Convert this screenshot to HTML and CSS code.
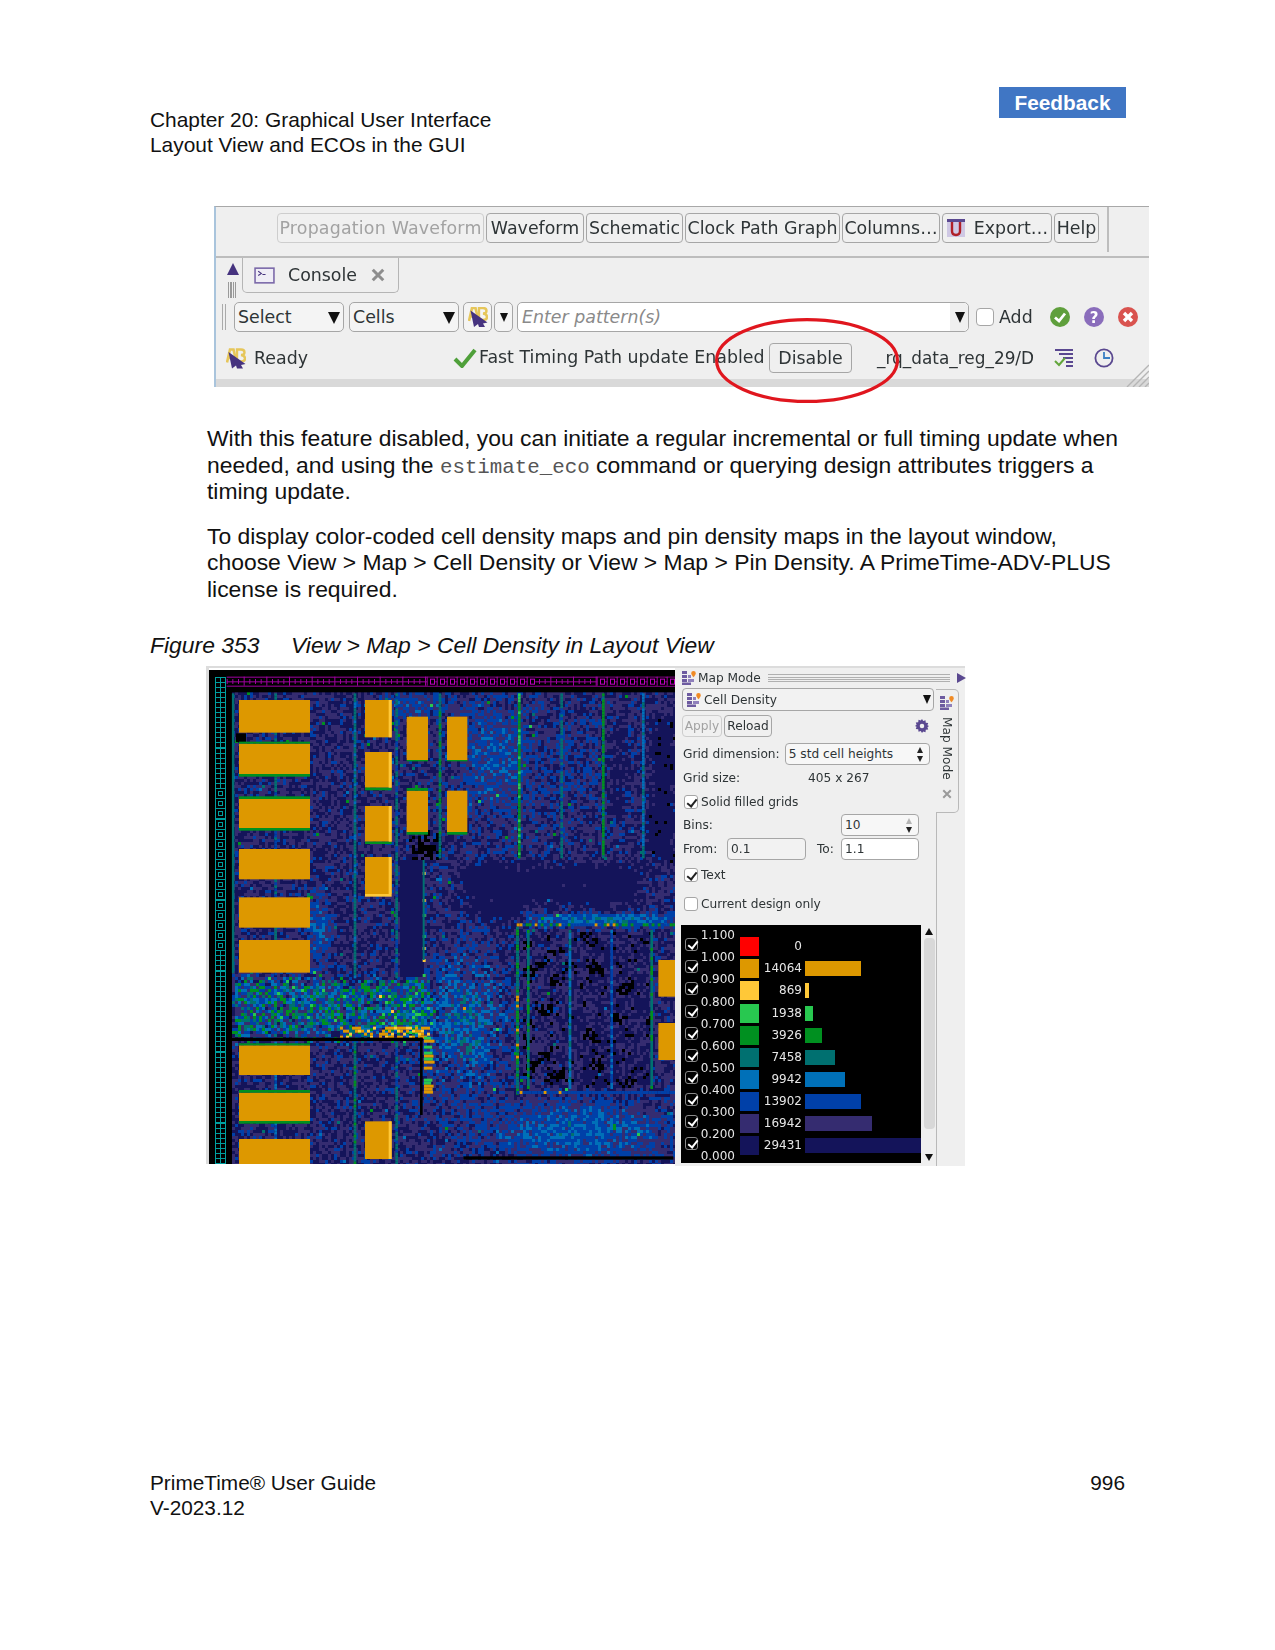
FILE: index.html
```html
<!DOCTYPE html>
<html lang="en">
<head>
<meta charset="utf-8">
<title>Layout View and ECOs in the GUI</title>
<link rel="stylesheet" href="styles.css">
</head>
<body>
<svg class="defs" width="0" height="0" aria-hidden="true">
  <symbol id="mapicon" viewBox="0 0 14 14">
    <rect x="0" y="0" width="5" height="3" fill="#6d5ba0"/><rect x="0" y="4" width="5" height="3" fill="#6d5ba0"/>
    <rect x="6" y="4" width="3" height="3" fill="#8f80bb"/><rect x="0" y="8" width="5" height="3" fill="#6d5ba0"/>
    <rect x="6" y="8" width="6" height="3" fill="#8f80bb"/><rect x="0" y="11.5" width="9" height="2.5" fill="#6d5ba0"/>
    <path d="M11.5 0a2.3 2.3 0 0 1 2.3 2.3c0 1.5-2.3 4-2.3 4s-2.300-2.500-2.300-4A2.300 2.300 0 0 1 11.500 0z" fill="#f08a24"/>
  </symbol>
  <symbol id="abicon" viewBox="0 0 20 20">
    <path d="M1 14 L4 1 L7.500 1 L10.500 14 M2.500 9.500 H9" fill="none" stroke="#e6c65a" stroke-width="2.600"/>
    <path d="M11 1 H15 Q18.500 1 18.500 4 Q18.500 6.500 15 6.500 Q19 7 19 10 Q19 13 15 13 H11 Z" fill="none" stroke="#e6c65a" stroke-width="2.400"/>
    <path d="M2.500 3.500 L19.500 15.500 L15 16.500 L17 20 L11 20 L10 17 L6 20 Z" fill="#46337f"/>
  </symbol>
</svg>
<div class="page">
  <header class="doc-head">
    <div class="chapter">
      <div>Chapter 20: Graphical User Interface</div>
      <div>Layout View and ECOs in the GUI</div>
    </div>
    <a class="feedback">Feedback</a>
  </header>

  <section class="toolbar">
    <div class="tabs">
      <span class="btn off w-prop">Propagation Waveform</span>
      <span class="btn w-wave">Waveform</span>
      <span class="btn w-sch">Schematic</span>
      <span class="btn w-clk">Clock Path Graph</span>
      <span class="btn w-col">Columns…</span>
      <span class="btn w-exp">
        <svg class="ico-export" viewBox="0 0 20 20" aria-hidden="true"><rect x="1" y="1" width="18" height="18" fill="#cfc8e4"/><rect x="1" y="1" width="18" height="3" fill="#5a4890"/><path d="M6 4 V13 Q6 17 10 17 Q14 17 14 13 V4" fill="none" stroke="#b02028" stroke-width="2.4"/></svg>
        Export…
      </span>
      <span class="btn w-help">Help</span>
      <span class="tabs-sep"></span>
    </div>
    <div class="console-row">
      <div class="side">
        <span class="tri-up"></span>
        <span class="grip-v"></span>
      </div>
      <div class="console-tab">
        <svg class="ico-console" viewBox="0 0 20 16" aria-hidden="true"><rect x="1" y="1" width="18" height="14" fill="#efedf6" stroke="#7a68a8" stroke-width="1.5"/><path d="M4 4 L7 6 L4 8 M8 7 H11" fill="none" stroke="#46337f" stroke-width="1"/></svg>
        <span>Console</span>
        <svg class="ico-x" viewBox="0 0 12 12" aria-hidden="true"><path d="M1.5 1.5 L10.5 10.5 M10.5 1.5 L1.5 10.5" stroke="#8d8d8d" stroke-width="2.6"/></svg>
      </div>
    </div>
    <div class="select-row">
      <span class="grip-row"></span>
      <span class="combo w-select">Select<i class="caret"></i></span>
      <span class="combo w-cells">Cells<i class="caret"></i></span>
      <span class="combo w-ab"><svg class="ico-ab" aria-hidden="true"><use href="#abicon"/></svg></span>
      <span class="combo w-arrow"><i class="caret small"></i></span>
      <span class="input-pattern"><em>Enter pattern(s)</em><b class="end-cap"><i class="caret"></i></b></span>
      <span class="box big"></span>
      <span class="add">Add</span>
      <svg class="round first" viewBox="0 0 20 20" aria-hidden="true"><circle cx="10" cy="10" r="10" fill="#5f9f3c"/><path d="M5 10.5 L9 14 L15 6.5" fill="none" stroke="#fff" stroke-width="2.8"/></svg>
      <svg class="round" viewBox="0 0 20 20" aria-hidden="true"><circle cx="10" cy="10" r="10" fill="#8a6dbb"/><text x="10" y="15.5" class="q">?</text></svg>
      <svg class="round" viewBox="0 0 20 20" aria-hidden="true"><circle cx="10" cy="10" r="10" fill="#d9534f"/><path d="M6 6 L14 14 M14 6 L6 14" stroke="#fff" stroke-width="3.4"/></svg>
    </div>
    <div class="status-row">
      <svg class="ico-ab ready-ico" aria-hidden="true"><use href="#abicon"/></svg>
      <span class="ready">Ready</span>
      <svg class="ico-check" viewBox="0 0 24 20" aria-hidden="true"><path d="M2 11 L9 18 L22 2" fill="none" stroke="#4fa03a" stroke-width="4"/></svg>
      <span class="fast">Fast Timing Path update Enabled</span>
      <span class="btn disable">Disable</span>
      <span class="path">_rq_data_reg_29/D</span>
      <svg class="ico-list" viewBox="0 0 20 20" aria-hidden="true"><path d="M1 2 H19 M5 6 H19 M9 10 H19 M12 14 H19 M12 18 H19" stroke="#5a4890" stroke-width="2"/><path d="M1 13 L5 17 L11 10" fill="none" stroke="#63a63c" stroke-width="2"/></svg>
      <svg class="ico-clock" viewBox="0 0 20 20" aria-hidden="true"><circle cx="10" cy="10" r="8.6" fill="none" stroke="#5a4890" stroke-width="1.8"/><path d="M10 4 V10 H16" fill="none" stroke="#3b7fc4" stroke-width="1.8"/></svg>
    </div>
    <div class="strip"></div>
    <svg class="resize" viewBox="0 0 24 24" aria-hidden="true"><path d="M2 24 L24 2 M8 24 L24 8 M14 24 L24 14 M20 24 L24 20" stroke="#b5b5b5" stroke-width="1.4"/></svg>
    <svg class="ellipse" viewBox="0 0 184 85" aria-hidden="true"><ellipse cx="92" cy="42.500" rx="90.400" ry="40.900" fill="none" stroke="#e0161e" stroke-width="3.200"/></svg>
  </section>

  <main class="copy">
    <p>With this feature disabled, you can initiate a regular incremental or full timing update when needed, and using the <code>estimate_eco</code> command or querying design attributes triggers a timing update.</p>
    <p>To display color-coded cell density maps and pin density maps in the layout window, choose View &gt; Map &gt; Cell Density or View &gt; Map &gt; Pin Density. A PrimeTime-ADV-PLUS license is required.</p>
  </main>

  <div class="caption"><span class="fig-no">Figure 353</span><span>View &gt; Map &gt; Cell Density in Layout View</span></div>

  <section class="figure">
    <canvas id="map" class="map" width="466" height="494"></canvas>
    <aside class="panel">
      <div class="panel-main">
        <div class="pm-head">
          <svg class="mi" aria-hidden="true"><use href="#mapicon"/></svg>
          <span class="pm-title">Map Mode</span>
          <span class="pm-grip"></span>
          <span class="tri-right"></span>
        </div>
        <div class="pm-body">
          <div class="pm-combo"><svg class="mi" aria-hidden="true"><use href="#mapicon"/></svg><span>Cell Density</span><i class="caret"></i></div>
          <div class="pm-actions">
            <span class="btn off sm apply">Apply</span>
            <span class="btn sm reload">Reload</span>
            <svg class="gear" viewBox="0 0 16 16" aria-hidden="true"><path d="M8 0l1.400 2.400 2.600-.9.3 2.800 2.800.3-.9 2.600L16 8l-1.800 1.400.9 2.600-2.800.3-.3 2.800-2.600-.9L8 16l-1.400-2.400-2.600.9-.3-2.800-2.800-.3.9-2.600L0 8l1.800-1.400-.9-2.600 2.800-.3.3-2.800 2.600.9z" fill="#5a4890"/><circle cx="8" cy="8" r="2.600" fill="#efefef"/></svg>
          </div>
          <div class="line griddim"><span>Grid dimension:</span><span class="spin w-grid">5 std cell heights<span class="updown"><i></i><i></i></span></span></div>
          <div class="line gridsize"><span class="gs-label">Grid size:</span><span>405 x 267</span></div>
          <label class="line check-line solid"><span class="box on"></span>Solid filled grids</label>
          <div class="line bins"><span>Bins:</span><span class="spin w-num">10<span class="updown dim"><i></i><i></i></span></span></div>
          <div class="line fromto"><span class="from">From:</span><span class="field w-from">0.1</span><span class="to">To:</span><span class="field w-num">1.1</span></div>
          <label class="line check-line text-chk"><span class="box on"></span>Text</label>
          <label class="line check-line cur"><span class="box"></span>Current design only</label>
          <div class="legend-wrap">
            <div class="legend">
              <div class="l-checks">
                <span class="box on inv"></span><span class="box on inv"></span><span class="box on inv"></span><span class="box on inv"></span><span class="box on inv"></span><span class="box on inv"></span><span class="box on inv"></span><span class="box on inv"></span><span class="box on inv"></span><span class="box on inv"></span>
              </div>
              <div class="l-labels">
                <span>1.100</span><span>1.000</span><span>0.900</span><span>0.800</span><span>0.700</span><span>0.600</span><span>0.500</span><span>0.400</span><span>0.300</span><span>0.200</span><span>0.000</span>
              </div>
              <div class="l-rows">
                <div class="l-row"><i class="sw c0"></i><span class="n">0</span></div>
                <div class="l-row"><i class="sw c1"></i><span class="n">14064</span><i class="bar c1 b1"></i></div>
                <div class="l-row"><i class="sw c2"></i><span class="n">869</span><i class="bar c2 b2"></i></div>
                <div class="l-row"><i class="sw c3"></i><span class="n">1938</span><i class="bar c3 b3"></i></div>
                <div class="l-row"><i class="sw c4"></i><span class="n">3926</span><i class="bar c4 b4"></i></div>
                <div class="l-row"><i class="sw c5"></i><span class="n">7458</span><i class="bar c5 b5"></i></div>
                <div class="l-row"><i class="sw c6"></i><span class="n">9942</span><i class="bar c6 b6"></i></div>
                <div class="l-row"><i class="sw c7"></i><span class="n">13902</span><i class="bar c7 b1"></i></div>
                <div class="l-row"><i class="sw c8"></i><span class="n">16942</span><i class="bar c8 b8"></i></div>
                <div class="l-row"><i class="sw c9"></i><span class="n">29431</span><i class="bar c9 b9"></i></div>
              </div>
            </div>
            <div class="scroll"><span class="tri-up dark"></span><span class="thumb"></span><span class="tri-down"></span></div>
          </div>
        </div>
      </div>
      <div class="dock">
        <div class="dock-tab">
          <svg class="mi" aria-hidden="true"><use href="#mapicon"/></svg>
          <span class="vtext">Map Mode</span>
          <svg class="dock-x" viewBox="0 0 12 12" aria-hidden="true"><path d="M1.500 1.500 L10.500 10.500 M10.500 1.500 L1.500 10.500" stroke="#9a9a9a" stroke-width="2.400"/></svg>
        </div>
      </div>
    </aside>
  </section>

  <footer class="doc-foot">
    <div>
      <div>PrimeTime® User Guide</div>
      <div>V-2023.12</div>
    </div>
    <div>996</div>
  </footer>
</div>
<script src="script.js"></script>
</body>
</html>
```
FILE: styles.css
```css
* { box-sizing: border-box; }
html, body { margin: 0; padding: 0; background: #fff; }
body { font-family: "Liberation Sans", Arial, sans-serif; color: #111; }
.defs { position: absolute; }
.page { width: 1275px; height: 1650px; display: flex; flex-direction: column; }

.doc-head { display: flex; justify-content: space-between; align-items: flex-start; padding: 87px 149px 0 150px; height: 157px; flex: none; }
.chapter { margin-top: 20px; font-size: 20.900px; line-height: 25px; }
.feedback { display: block; width: 127px; height: 31px; background: #4076c4; color: #fff; font-weight: 700; font-size: 20.800px; line-height: 31px; text-align: center; }

/* toolbar */
.toolbar { position: relative; margin: 49px 0 0 214px; width: 935px; height: 181px; flex: none; background: #efefef; border-left: 2px solid #a9c4dc; border-top: 1px solid #a8a8a8; font-family: "DejaVu Sans", sans-serif; font-size: 17.400px; color: #2e3436; display: flex; flex-direction: column; }
.toolbar > *:not(.ellipse) { filter: blur(.35px); }
.btn { display: flex; align-items: center; justify-content: center; height: 30px; border: 1px solid #a6a6a6; border-radius: 4px; background: #f0f0f0; white-space: nowrap; flex: none; }
.btn.off { color: #a2a2a2; border-color: #cdcdcd; }
.tabs { height: 51px; flex: none; display: flex; align-items: flex-start; gap: 2px; padding: 6px 0 0 61px; border-bottom: 2px solid #bdbdbd; }
.w-prop { width: 207px; letter-spacing: .2px; }
.w-wave { width: 98px; }
.w-sch { width: 97px; }
.w-clk { width: 155px; }
.w-col { width: 98px; }
.w-exp { width: 110px; gap: 8px; }
.w-help { width: 45px; }
.ico-export { width: 20px; height: 20px; }
.tabs-sep { width: 2px; height: 45px; margin: -6px 0 0 6px; background: #bdbdbd; }

.console-row { height: 44px; flex: none; display: flex; padding-left: 7px; }
.side { width: 19px; display: flex; flex-direction: column; align-items: center; padding-top: 5px; gap: 7px; }
.tri-up { width: 0; height: 0; border-left: 6px solid transparent; border-right: 6px solid transparent; border-bottom: 12px solid #46337f; }
.grip-v { width: 10px; height: 16px; background: repeating-linear-gradient(90deg, #9a9a9a 0 1px, #efefef 1px 2.500px); }
.console-tab { width: 157px; height: 35px; border: 1px solid #b5b5b5; border-top: 0; border-radius: 0 0 5px 5px; display: flex; align-items: center; gap: 13px; padding-left: 11px; }
.ico-console { width: 21px; height: 17px; }
.ico-x { width: 14px; height: 14px; margin-left: 1px; }

.select-row { height: 30px; flex: none; display: flex; align-items: center; padding-left: 6px; }
.grip-row { width: 5px; height: 26px; margin-right: 7px; background: repeating-linear-gradient(90deg, #aaa 0 1px, #efefef 1px 2.500px); }
.combo { position: relative; height: 30px; border: 1px solid #a6a6a6; border-radius: 5px; background: #f4f4f4; display: flex; align-items: center; padding-left: 3px; flex: none; }
.w-select { width: 110px; margin-right: 5px; }
.w-cells { width: 110px; margin-right: 4px; }
.w-ab { width: 29px; margin-right: 2px; padding-left: 4px; }
.w-arrow { width: 19px; margin-right: 4px; padding-left: 0; justify-content: center; }
.caret { position: absolute; right: 3px; top: 9px; width: 0; height: 0; border-left: 6px solid transparent; border-right: 6px solid transparent; border-top: 12px solid #111; }
.w-arrow .caret { right: 4px; top: 10px; border-left-width: 4.500px; border-right-width: 4.500px; border-top-width: 9px; }
.ico-ab { width: 20px; height: 20px; }
.input-pattern { position: relative; width: 452px; height: 30px; background: #fff; border: 1px solid #a6a6a6; border-radius: 5px; display: flex; align-items: center; padding-left: 4px; color: #8a8a8a; }
.input-pattern em { font-style: italic; }
.end-cap { position: absolute; right: 0; top: 0; width: 18px; height: 28px; background: #efefef; border-radius: 0 5px 5px 0; }
.end-cap .caret { right: 3px; top: 9px; border-left-width: 5px; border-right-width: 5px; border-top-width: 11px; }
.box { display: block; position: relative; flex: none; width: 14px; height: 14px; border: 1px solid #a6a6a6; border-radius: 3px; background: #fff; }
.box.big { width: 18px; height: 18px; margin-left: 7px; border-radius: 4px; }
.box.on::after { content: ""; position: absolute; left: 4px; top: 1px; width: 4px; height: 8px; border: solid #222; border-width: 0 2px 2px 0; transform: rotate(38deg); }
.add { margin-left: 5px; width: 51px; }
.round { width: 20px; height: 20px; margin-left: 14px; flex: none; }
.round.first { margin-left: 0; }
.q { font: 700 15px "DejaVu Sans", sans-serif; fill: #fff; text-anchor: middle; }

.status-row { height: 30px; margin-top: 11px; flex: none; display: flex; align-items: center; padding-left: 10px; }
.ready-ico { width: 20px; height: 21px; }
.ready { margin-left: 8px; width: 199px; }
.ico-check { width: 24px; height: 20px; flex: none; }
.fast { margin: 0 0 3px 2px; width: 290px; white-space: nowrap; }
.btn.disable { width: 83px; background: #efefef; }
.path { margin-left: 25px; width: 177px; white-space: nowrap; font-size: 16.900px; }
.ico-list { width: 20px; height: 20px; }
.ico-clock { width: 20px; height: 20px; margin-left: 20px; }
.strip { height: 8px; margin-top: 6px; background: #d9d9d9; flex: none; }
.resize { position: absolute; right: 0; bottom: 0; width: 24px; height: 24px; }
.ellipse { position: absolute; left: 499px; top: 111px; width: 184px; height: 85px; overflow: visible; }

/* copy */
.copy { margin: 38px 0 0 207px; width: 922px; font-size: 22.900px; line-height: 26.500px; }
.copy p { margin: 0 0 18px; }
.copy code { font-family: "Liberation Mono", monospace; font-size: 20.800px; line-height: 1; color: #555; }
.caption { margin: 12px 0 8px 150px; height: 26px; font-style: italic; font-size: 22.900px; line-height: 26px; display: flex; flex: none; }
.fig-no { width: 141px; }

/* figure */
.figure { margin-left: 206px; width: 759px; height: 498px; flex: none; display: flex; background: #fff; border: 2px solid #dcdcdc; border-width: 2px 0 0 3px; font-family: "DejaVu Sans", sans-serif; font-size: 12.200px; color: #2e3436; padding-top: 2px; }
.map { display: block; width: 466px; height: 494px; flex: none; }
.panel { width: 290px; height: 498px; margin-top: -2px; background: #efefef; display: flex; flex: none; filter: blur(.25px); }
.panel-main { width: 261px; flex: none; padding-left: 7px; }
.pm-head { width: 285px; height: 20px; display: flex; align-items: center; gap: 2px; }
.pm-title { white-space: nowrap; width: 62px; flex: none; }
.mi { width: 14px; height: 14px; flex: none; }
.pm-grip { width: 182px; height: 8px; margin-left: 6px; background: repeating-linear-gradient(180deg, #b0b0b0 0 1px, #efefef 1px 2.500px); flex: none; }
.tri-right { margin-left: 5px; width: 0; height: 0; border-top: 5px solid transparent; border-bottom: 5px solid transparent; border-left: 9px solid #5a4890; flex: none; }
.pm-body { display: flex; flex-direction: column; }
.pm-combo { position: relative; width: 252px; height: 23px; border: 1px solid #a6a6a6; border-radius: 4px; display: flex; align-items: center; gap: 3px; padding-left: 4px; background: #f2f2f2; }
.pm-combo .caret { right: 2px; top: 6px; border-left-width: 4px; border-right-width: 4px; border-top-width: 9px; }
.pm-actions { display: flex; align-items: center; gap: 2px; height: 22px; margin-top: 4px; width: 252px; }
.btn.sm { height: 22px; }
.apply { width: 40px; }
.reload { width: 48px; }
.gear { width: 14px; height: 14px; margin-left: auto; margin-right: 5px; }
.line { display: flex; align-items: center; padding-left: 1px; }
.griddim { height: 22px; margin-top: 6px; gap: 5px; }
.spin { position: relative; height: 22px; border: 1px solid #a6a6a6; border-radius: 4px; background: #f7f7f7; display: flex; align-items: center; padding-left: 3px; flex: none; }
.w-grid { width: 145px; }
.w-num { width: 78px; }
.updown { position: absolute; right: 6px; top: 3px; display: flex; flex-direction: column; gap: 3px; }
.updown i { display: block; width: 0; height: 0; border-left: 3.500px solid transparent; border-right: 3.500px solid transparent; }
.updown i:first-child { border-bottom: 6px solid #222; }
.updown i:last-child { border-top: 6px solid #222; }
.updown.dim i:first-child { border-bottom-color: #b5b5b5; }
.gridsize { height: 14px; margin-top: 6px; }
.gs-label { width: 125px; }
.check-line { gap: 3px; height: 14px; }
.solid { margin-top: 10px; }
.check-line .box { margin-left: 1px; }
.bins { height: 22px; margin-top: 5px; justify-content: space-between; width: 237px; }
.fromto { height: 22px; margin-top: 2px; }
.from { width: 44px; }
.field { height: 22px; border: 1px solid #a6a6a6; border-radius: 4px; background: #fff; display: flex; align-items: center; padding-left: 3px; flex: none; }
.w-from { width: 79px; background: #f2f2f2; }
.to { margin-left: 11px; width: 24px; }
.text-chk { margin-top: 8px; }
.cur { margin-top: 15px; }

.legend-wrap { display: flex; margin-top: 14px; height: 238px; margin-left: -1px; }
.legend { width: 240px; height: 238px; background: #000; color: #e6e6e6; display: flex; position: relative; overflow: hidden; flex: none; font-size: 12px; }
.l-checks { width: 22px; padding: 13px 0 0 4px; display: flex; flex-direction: column; flex: none; }
.box.inv { width: 13px; height: 13px; margin-bottom: 9.100px; background: #000; border-color: #8a8a8a; }
.box.inv.on::after { border-color: #fff; left: 3.500px; top: 0; }
.l-labels { width: 32px; margin-top: 2px; display: flex; flex-direction: column; align-items: flex-end; flex: none; }
.l-labels span { height: 22.100px; line-height: 16px; flex: none; }
.l-rows { padding: 12px 0 0 5px; display: flex; flex-direction: column; flex: none; }
.l-row { position: relative; height: 22.100px; display: flex; align-items: flex-start; flex: none; }
.sw { width: 19px; height: 19px; flex: none; display: block; }
.n { width: 43px; text-align: right; line-height: 19px; flex: none; }
.bar { height: 15px; margin: 2px 0 0 3px; display: block; flex: none; }
.c0 { background: #ff0000; } .c1 { background: #dd9800; } .c2 { background: #ffc838; } .c3 { background: #28c850; } .c4 { background: #009020; } .c5 { background: #007070; } .c6 { background: #0070b8; } .c7 { background: #0040a8; } .c8 { background: #352c70; } .c9 { background: #14145a; }
.b1 { width: 56px; } .b2 { width: 4px; } .b3 { width: 8px; } .b4 { width: 17px; } .b5 { width: 30px; } .b6 { width: 40px; } .b8 { width: 67px; } .b9 { width: 117px; }

.scroll { width: 14px; margin-left: 1px; display: flex; flex-direction: column; align-items: center; padding-top: 3px; position: relative; }
.tri-up.dark { border-left-width: 4px; border-right-width: 4px; border-bottom: 7px solid #111; }
.thumb { width: 11px; height: 191px; margin-top: 3px; background: #d8d8d8; border-radius: 4px; }
.tri-down { margin-top: 25px; width: 0; height: 0; border-left: 4px solid transparent; border-right: 4px solid transparent; border-top: 7px solid #111; }

.dock { width: 29px; flex: none; position: relative; }
.dock-tab { width: 23px; height: 124px; margin-top: 21px; border: 1px solid #b9b9b9; border-left: 0; border-radius: 0 5px 5px 0; display: flex; flex-direction: column; align-items: center; padding-top: 6px; background: #efefef; }
.dock::before { content: ""; position: absolute; left: 0; top: 145px; bottom: 0; width: 1px; background: #b9b9b9; }
.vtext { writing-mode: vertical-rl; margin-top: 7px; white-space: nowrap; color: #2e3436; }
.dock-x { width: 10px; height: 10px; margin-top: 9px; }

.doc-foot { margin-top: auto; height: 180px; padding: 0 150px; display: flex; justify-content: space-between; align-items: flex-start; font-size: 20.800px; line-height: 25px; flex: none; }
```
FILE: script.js
```js
(function () {
  var cv = document.getElementById('map');
  var g = cv.getContext('2d');
  var seed = 20231;
  function rnd() { seed = (seed * 1664525 + 1013904223) >>> 0; return seed / 4294967296; }
  function X(v) { return (v - 27) / 3; }
  function Y(v) { return (v - 30) / 3; }
  function box(c, x1, x2, y1, y2) { g.fillStyle = c; g.fillRect(X(x1), Y(y1), (x2 - x1) / 3, (y2 - y1) / 3); }
  function gauss(x, y, cx, cy, sx, sy, a) {
    var dx = (x - cx) / sx, dy = (y - cy) / sy;
    return a * Math.exp(-(dx * dx + dy * dy));
  }
  function inR(x, y, a, b, c, d) { return x >= a && x <= b && y >= c && y <= d; }
  function clump(x, y) { return Math.sin(x / 31 + 1.6 * Math.sin(y / 47)) * Math.sin(y / 23 + 1.3 * Math.sin(x / 41)); }
  var NAVY = '#14145a', PUR = '#352c70', BLUE = '#0040a8', LB = '#0070b8', TEAL = '#007070',
      GRN = '#009020', LG = '#28c850', YEL = '#ffc838', ORG = '#e09800';
  g.fillStyle = '#000'; g.fillRect(0, 0, 466, 494);
  for (var ly = 22; ly < 494; ly += 3) {
    for (var lx = 23; lx < 466; lx += 3) {
      var x = 27 + lx * 3, y = 30 + ly * 3;
      var jx = x + (rnd() - 0.5) * 50, jy = y + (rnd() - 0.5) * 50;
      var h = 0.15, amp = 0.3;
      if (inR(jx, jy, 95, 680, 955, 1130)) { h = 0.42; amp = 0.62; }
      h += gauss(x, y, 790, 1080, 120, 190, 0.26);
      if (gauss(x, y, 790, 1080, 120, 190, 1) > 0.3) { amp = 0.42; }
      h += gauss(x, y, 1130, 1410, 280, 90, 0.26);
      h += gauss(x, y, 880, 290, 120, 190, 0.18);
      h += gauss(x, y, 640, 130, 120, 40, 0.16);
      h += gauss(x, y, 350, 800, 40, 110, 0.2);
      h += gauss(x, y, 1200, 775, 260, 22, 0.32);
      h += gauss(x, y, 1140, 340, 130, 220, 0.06);
      var dark = false, sparse = false;
      if (inR(jx, jy, 780, 1320, 610, 735) || inR(jx, jy, 820, 960, 735, 790)) { h = 0.02; dark = true; }
      if (inR(x, y, 600, 665, 600, 950)) { h = 0.02; dark = true; }
      if (inR(jx, jy, 1345, 1425, 170, 600)) { h = 0.0; dark = true; sparse = true; }
      if (inR(x, y, 965, 1350, 810, 1280)) { h = 0.09 + (x < 1110 ? 0.05 : 0); sparse = true; }
      if (inR(jx, jy, 1225, 1265, 190, 480)) { h = 0.05; dark = true; }
      if (inR(jx, jy, 640, 705, 530, 585)) { h = -1; }
      var v = h + (rnd() - 0.5) * amp + (rnd() < 0.008 ? 0.4 : 0);
      var c;
      if (dark && rnd() < 0.92) { c = sparse && rnd() < 0.04 ? '#000' : NAVY; }
      else if (v < -0.5) { c = '#000'; }
      else if (sparse && (rnd() < 0.06 || (clump(x, y) > 0.55 && rnd() < 0.55))) { c = '#000'; }
      else if (v < 0.13) { c = NAVY; }
      else if (v < 0.27) { c = PUR; }
      else if (v < 0.41) { c = BLUE; }
      else if (v < 0.53) { c = LB; }
      else if (v < 0.62) { c = TEAL; }
      else if (v < 0.72) { c = GRN; }
      else if (v < 0.84) { c = LG; }
      else if (v < 0.95) { c = rnd() < 0.5 ? YEL : LG; }
      else { c = rnd() < 0.6 ? ORG : YEL; }
      g.fillStyle = c; g.fillRect(lx, ly, 3, 3);
    }
  }
  // long vertical rails
  [[465, 100, 950, TEAL, LB], [465, 1145, 1510, TEAL, GRN], [590, 100, 950, TEAL, BLUE], [590, 1145, 1510, TEAL, BLUE], [720, 100, 590, TEAL, GRN], [958, 100, 590, GRN, LG],
   [1085, 100, 590, TEAL, BLUE], [1210, 100, 590, GRN, TEAL], [1330, 100, 590, LB, TEAL], [985, 810, 1280, TEAL, GRN], [1110, 810, 1280, LB, TEAL], [1235, 810, 1280, BLUE, LB], [1355, 810, 1280, TEAL, GRN], [227, 100, 940, TEAL, BLUE], [227, 1145, 1510, LB, BLUE]]
    .forEach(function (r) {
      for (var yy = r[1]; yy < r[2]; yy += 9) {
        box(rnd() < 0.7 ? r[3] : r[4], r[0] - 4, r[0] + 4, yy, yy + 9);
      }
    });
  box(TEAL, 95, 103, 100, 940);
  // hot route and heavy black routing channels
  for (var a = 420; a < 690; a += 9) { for (var b = 1100; b < 1130; b += 9) { if (rnd() < 0.7 && (a > 540 || rnd() < 0.5)) { box(rnd() < 0.7 ? ORG : YEL, a, a + 9, b, b + 9); } } }
  for (var b2 = 1130; b2 < 1300; b2 += 9) { if (rnd() < 0.6) { box(rnd() < 0.5 ? ORG : LG, 672, 690 + rnd() * 14, b2, b2 + 9); } }
  for (var b3 = 600; b3 < 950; b3 += 9) { if (rnd() < 0.14) { box(rnd() < 0.5 ? YEL : LG, 668, 677, b3, b3 + 9); } }
  box(TEAL, 668, 674, 600, 900);
  for (var b4 = 800; b4 < 1300; b4 += 9) { box(rnd() < 0.12 ? ORG : (rnd() < 0.5 ? GRN : TEAL), 948, 957, b4, b4 + 9); }
  for (var a4 = 950; a4 < 1425; a4 += 9) { box(rnd() < 0.12 ? ORG : (rnd() < 0.4 ? GRN : BLUE), a4, a4 + 9, 790, 799); box(rnd() < 0.1 ? ORG : BLUE, a4, a4 + 9, 1293, 1302); }
  box('#000', 95, 668, 1133, 1143);
  box('#000', 660, 668, 1133, 1365);
  box('#000', 790, 1420, 1489, 1499);
  box('#000', 108, 138, 220, 246);
  // macros
  var O = '#dd9800';
  [[117, 330, 120, 218], [117, 330, 251, 342], [117, 330, 417, 504], [117, 330, 567, 658], [117, 330, 712, 803], [117, 330, 840, 938],
   [117, 330, 1156, 1245], [117, 330, 1298, 1383], [117, 330, 1437, 1512], [495, 575, 120, 232], [495, 575, 276, 383], [495, 575, 438, 545], [495, 575, 591, 702],
   [620, 684, 170, 300], [741, 802, 170, 300], [620, 684, 392, 516], [741, 802, 392, 516], [495, 575, 1384, 1497], [1375, 1425, 900, 1010], [1375, 1425, 1089, 1200]]
    .forEach(function (m) { box(O, m[0], m[1], m[2], m[3]); });
  [[117, 330, 245, 251], [117, 330, 342, 350], [117, 330, 409, 417], [117, 330, 504, 512], [117, 330, 1150, 1156], [117, 330, 1290, 1298], [117, 330, 1383, 1391],
   [495, 575, 383, 391], [495, 575, 545, 552], [620, 684, 300, 304], [741, 802, 300, 304], [620, 684, 516, 524], [741, 802, 516, 524], [620, 684, 384, 392]]
    .forEach(function (m) { box(GRN, m[0], m[1], m[2], m[3]); });
  [[566, 575, 120, 232], [566, 575, 276, 383], [566, 575, 438, 545], [566, 575, 591, 702], [495, 575, 702, 710], [566, 575, 1384, 1497]]
    .forEach(function (m) { box(YEL, m[0], m[1], m[2], m[3]); });
  // top strip: magenta tracks
  box('#000', 27, 1425, 30, 97);
  box('#000', 27, 95, 30, 1512);
  g.fillStyle = '#a000a0';
  g.fillRect(X(80), Y(50), 449, 1);
  g.fillRect(X(80), Y(77), 449, 1);
  g.fillRect(X(80), Y(64), 449, 1);
  var t, step = 0;
  for (t = 80; t < 680; t += 17) {
    step++;
    g.fillRect(X(t), step % 4 === 0 ? Y(50) : Y(57), 1, step % 4 === 0 ? 9 : 5);
  }
  for (t = 1000; t < 1190; t += 17) {
    step++;
    g.fillRect(X(t), step % 4 === 0 ? Y(50) : Y(57), 1, step % 4 === 0 ? 9 : 5);
  }
  [[680, 1000], [1190, 1425]].forEach(function (s) {
    for (var q = s[0]; q < s[1]; q += 30) {
      g.fillStyle = '#000'; g.fillRect(X(q + 2), Y(53), 8, 8);
      g.fillStyle = '#a000a0'; g.fillRect(X(q), Y(50), 1, 9);
      g.strokeStyle = '#c000c0'; g.lineWidth = 1;
      g.strokeRect(Math.round(X(q + 9)) + .5, Y(56) + .5, 4, 5);
    }
  });
  // left strip: teal pads
  g.strokeStyle = '#00a0a0'; g.lineWidth = 1;
  g.fillStyle = '#00a0a0';
  for (var p = 50; p < 1512; p += 30.4) {
    var py = Math.round(Y(p)) + .5;
    g.strokeRect(6.5, py, 10, 10);
    if (p > 380 && p < 850 || p > 1480) {
      g.strokeRect(9.5, py + 3, 4, 4);
    } else {
      g.fillRect(11, py, 1, 10);
      g.fillRect(7, py + 4.5, 10, 1);
    }
  }
})();
```
